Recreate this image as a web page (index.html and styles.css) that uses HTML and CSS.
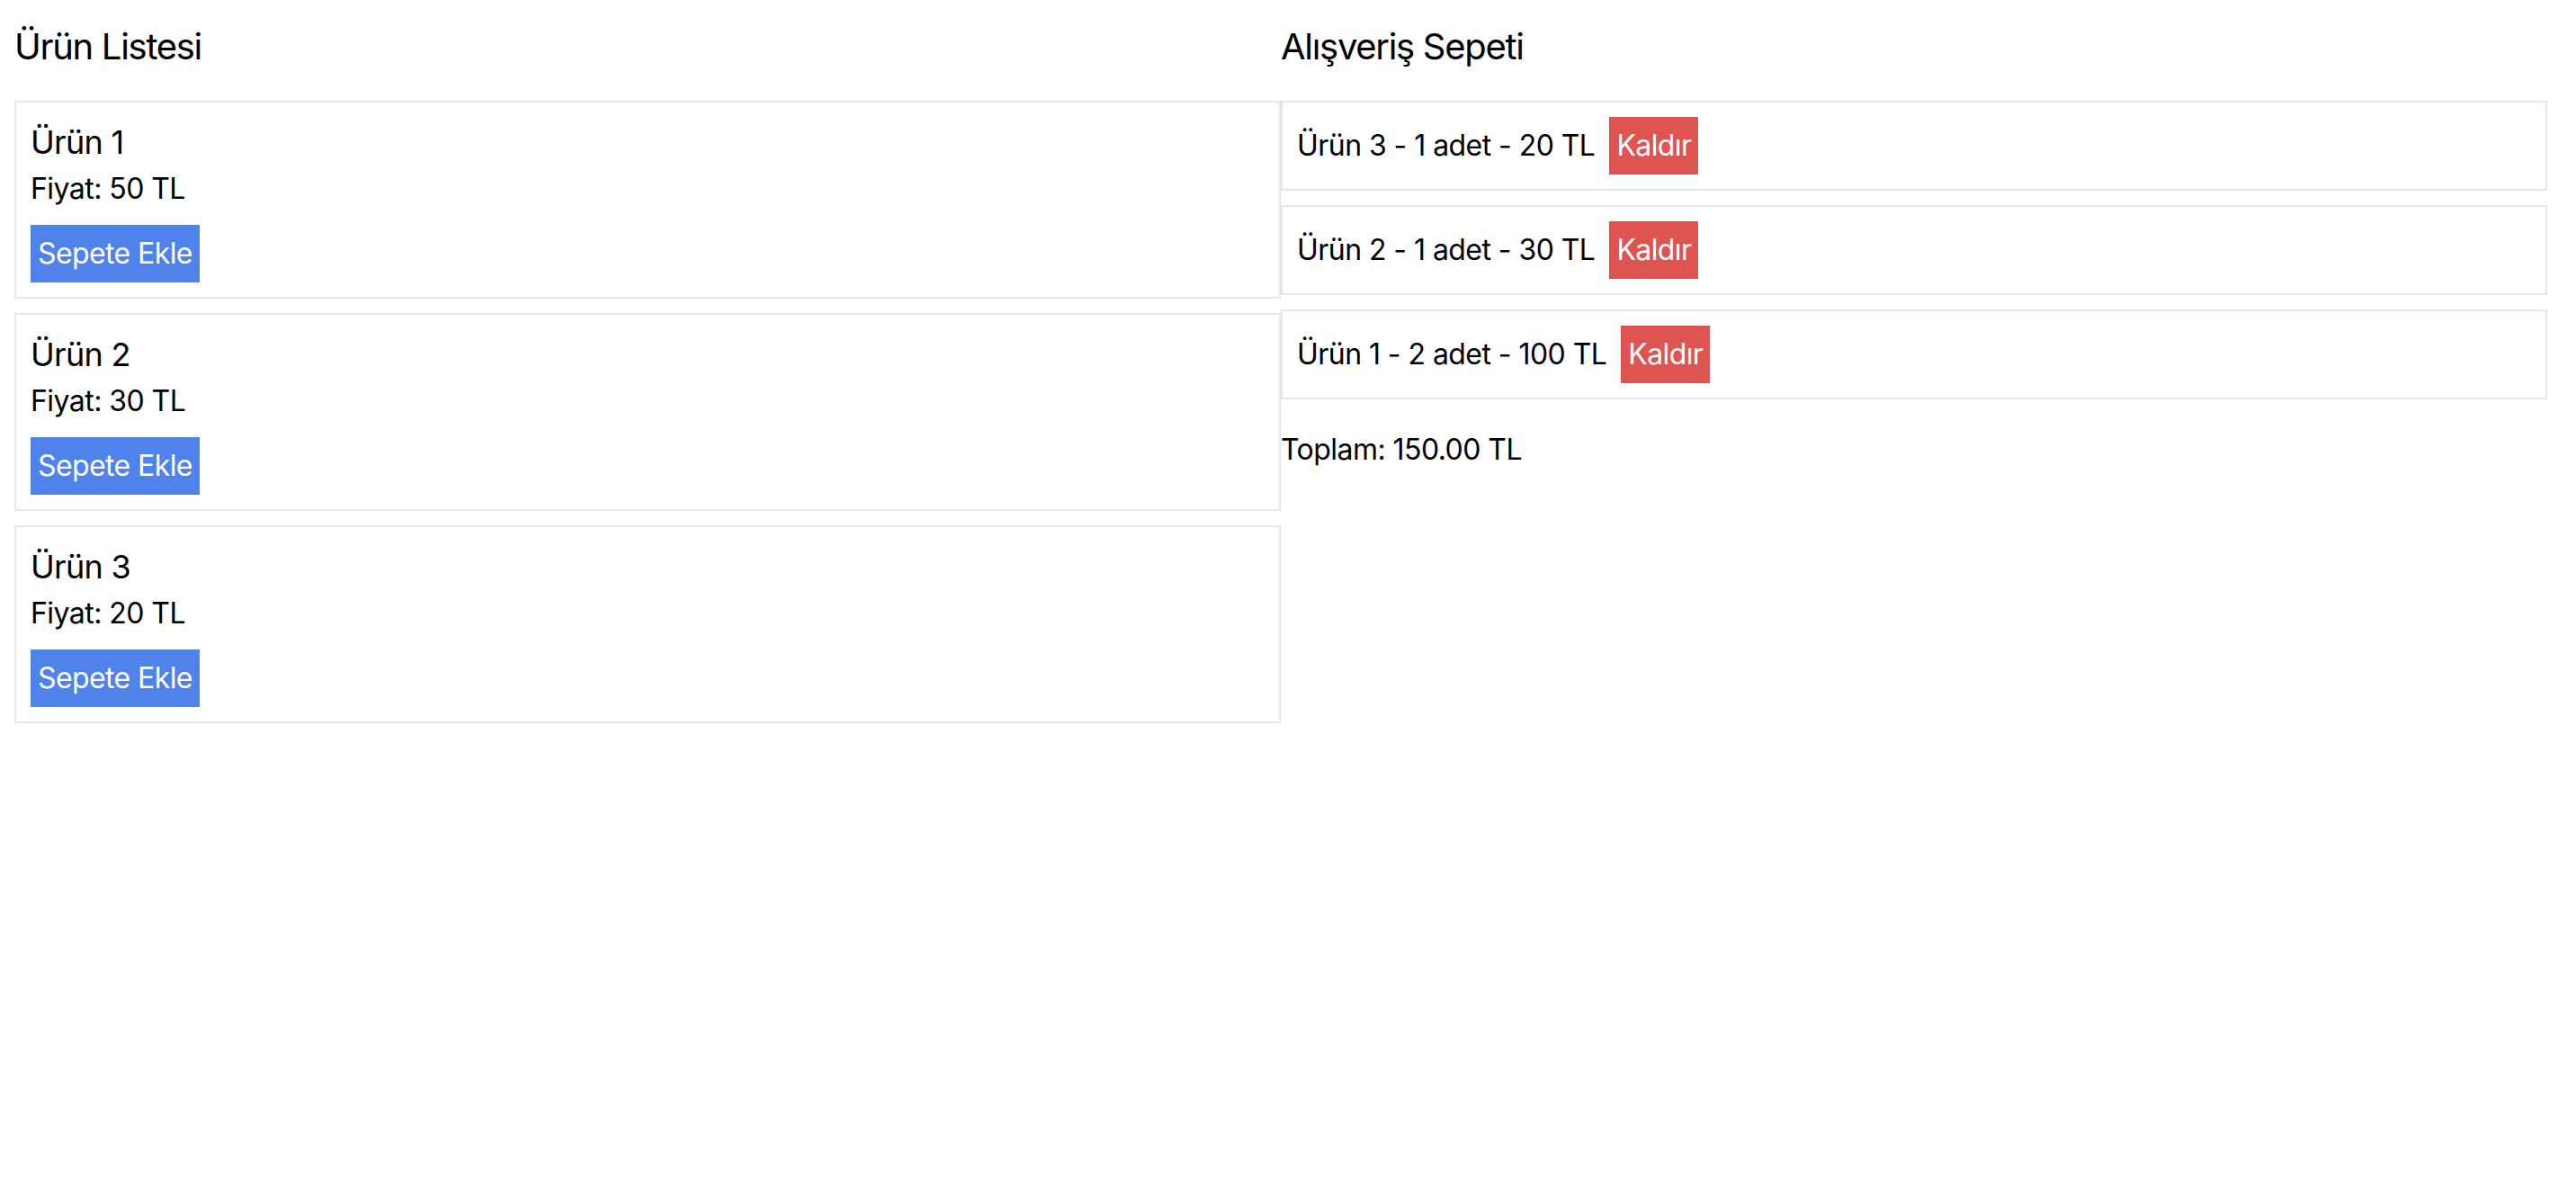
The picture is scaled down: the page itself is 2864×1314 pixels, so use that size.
FILE: index.html
```html
<!DOCTYPE html>
<html lang="tr">
<head>
<meta charset="utf-8">
<title>Alışveriş</title>
<link rel="stylesheet" href="styles.css">
</head>
<body>
<div class="layout">
  <section class="column">
    <h2 class="section-title">Ürün Listesi</h2>
    <div class="product-card">
      <h3 class="product-name">Ürün 1</h3>
      <p class="product-price">Fiyat: 50 TL</p>
      <button class="btn btn-add">Sepete Ekle</button>
    </div>
    <div class="product-card">
      <h3 class="product-name">Ürün 2</h3>
      <p class="product-price">Fiyat: 30 TL</p>
      <button class="btn btn-add">Sepete Ekle</button>
    </div>
    <div class="product-card">
      <h3 class="product-name">Ürün 3</h3>
      <p class="product-price">Fiyat: 20 TL</p>
      <button class="btn btn-add">Sepete Ekle</button>
    </div>
  </section>
  <section class="column">
    <h2 class="section-title">Alışveriş Sepeti</h2>
    <div class="cart-item">
      <span class="cart-text">Ürün 3 - 1 adet - 20 TL</span>
      <button class="btn btn-remove">Kaldır</button>
    </div>
    <div class="cart-item">
      <span class="cart-text">Ürün 2 - 1 adet - 30 TL</span>
      <button class="btn btn-remove">Kaldır</button>
    </div>
    <div class="cart-item">
      <span class="cart-text">Ürün 1 - 2 adet - 100 TL</span>
      <button class="btn btn-remove">Kaldır</button>
    </div>
    <p class="cart-total">Toplam: 150.00 TL</p>
  </section>
</div>
</body>
</html>
```
FILE: styles.css
```css
html, body {
  background: #ffffff;
}
body {
  margin: 16px;
  font-family: Inter, "Noto Sans", "Liberation Sans", sans-serif;
  color: #000000;
  font-size: 32px;
  line-height: 48px;
  letter-spacing: -0.55px;
}
.layout {
  display: grid;
  grid-template-columns: 1fr 1fr;
  margin-right: 16px;
}
.column {
  min-width: 0;
}
.section-title {
  font-size: 40px;
  line-height: 56px;
  font-weight: 400;
  letter-spacing: -1.3px;
  margin: 8px 0 32px;
}
.product-card {
  border: 2px solid #e5e7eb;
  padding: 16px;
  margin-bottom: 16px;
}
.product-name {
  font-size: 36px;
  line-height: 56px;
  font-weight: 400;
  letter-spacing: -0.7px;
  margin: 0;
}
.product-price {
  margin: 0;
  font-size: 32px;
  line-height: 48px;
}
.btn {
  font-family: inherit;
  font-size: 32px;
  line-height: 48px;
  letter-spacing: -0.6px;
  color: #ffffff;
  border: 0;
  border-radius: 0;
  padding: 8px;
  margin: 0;
  cursor: pointer;
  display: inline-block;
}
.btn-add {
  background: #5082ec;
  margin-top: 16px;
}
.btn-remove {
  background: #de5450;
  margin-left: 16px;
}
.cart-item {
  border: 2px solid #e5e7eb;
  padding: 16px;
  margin-bottom: 16px;
  display: flex;
  align-items: center;
}
.cart-text {
  font-size: 32px;
  line-height: 48px;
}
.cart-total {
  margin: 32px 0 0;
  font-size: 32px;
  line-height: 48px;
}
```
